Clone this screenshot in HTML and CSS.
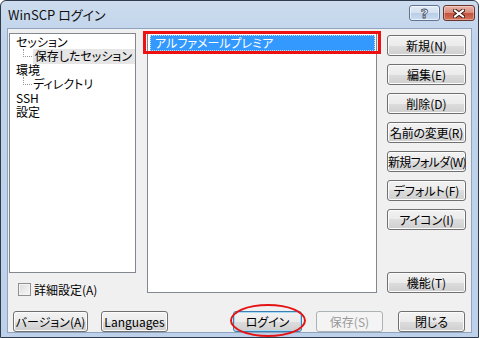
FILE: index.html
```html
<!DOCTYPE html>
<html lang="ja">
<head>
    <meta charset="UTF-8">
    <title>WinSCP ログイン</title>
    <link rel="stylesheet" href="styles.css">
</head>
<body>
    <div class="window">
        <div class="titlebar">
            <span class="title">WinSCP ログイン</span>
            <div class="caption-buttons">
                <span class="cap-btn help"><span class="q">?</span></span>
                <span class="cap-btn close">
                    <svg width="12" height="9" viewBox="0 0 12 9">
                        <path d="M2 1.5 L10 7.5 M10 1.5 L2 7.5" stroke="#3a1c18" stroke-width="4" stroke-linecap="square" fill="none"/>
                        <path d="M2 1.5 L10 7.5 M10 1.5 L2 7.5" stroke="#ffffff" stroke-width="2" stroke-linecap="square" fill="none"/>
                    </svg>
                </span>
            </div>
        </div>
        <div class="client">
            <div class="content">
                <div class="left">
                    <ul class="tree">
                        <li>セッション</li>
                        <li class="child"><span class="branch"></span><span class="sel">保存したセッション</span></li>
                        <li>環境</li>
                        <li class="child"><span class="branch"></span><span>ディレクトリ</span></li>
                        <li>SSH</li>
                        <li>設定</li>
                    </ul>
                    <label class="check"><span class="box"></span>詳細設定(A)</label>
                </div>
                <div class="sessions">
                    <div class="session selected">アルファメールプレミア</div>
                    <span class="mark-rect"></span>
                </div>
                <div class="side">
                    <button class="btn">新規(N)</button>
                    <button class="btn">編集(E)</button>
                    <button class="btn">削除(D)</button>
                    <button class="btn tight">名前の変更(R)</button>
                    <button class="btn tighter">新規フォルダ(W)</button>
                    <button class="btn">デフォルト(F)</button>
                    <button class="btn">アイコン(I)</button>
                    <div class="grow"></div>
                    <button class="btn">機能(T)</button>
                </div>
            </div>
            <div class="bottom">
                <button class="btn version">バージョン(A)</button>
                <button class="btn languages">Languages</button>
                <div class="grow"></div>
                <div class="login-wrap">
                    <button class="btn default">ログイン</button>
                    <span class="mark-ellipse"></span>
                </div>
                <button class="btn save" disabled>保存(S)</button>
                <button class="btn close-btn">閉じる</button>
            </div>
        </div>
    </div>
</body>
</html>
```

FILE: styles.css
```css
body {
    margin: 0;
    background-color: #ffffff;
    font-family: "Noto Sans CJK JP", sans-serif;
    font-size: 12px;
    font-feature-settings: "palt";
}

.window {
    width: 479px;
    height: 338px;
    box-sizing: border-box;
    border: 1px solid #2f3b4c;
    border-radius: 6px 6px 0 0;
    background: linear-gradient(#cddcee, #bfd3eb 40px, #bdd1ea);
    padding: 0 6px 4px 6px;
    display: flex;
    flex-direction: column;
}

.titlebar {
    height: 27px;
    display: flex;
    align-items: flex-start;
}

.title {
    line-height: 27px;
    font-size: 13px;
    color: #111;
    padding-left: 1px;
}

.caption-buttons {
    margin-left: auto;
    margin-top: 4px;
    display: flex;
    gap: 3px;
    margin-right: -3px;
}

.cap-btn {
    height: 16px;
    box-sizing: border-box;
    border: 1px solid #5f7490;
    border-radius: 3px;
    display: flex;
    align-items: center;
    justify-content: center;
}

.help {
    width: 31px;
    background: linear-gradient(#e4ecf6 0%, #d3e0ef 50%, #b9cde6 50%, #c9dbef 100%);
    box-shadow: inset 0 0 0 1px rgba(255, 255, 255, 0.6);
}

.help .q {
    font-family: "DejaVu Sans", sans-serif;
    font-weight: bold;
    font-size: 13px;
    line-height: 13px;
    color: #ffffff;
    -webkit-text-stroke: 0.8px #3d4a5c;
}

.close {
    width: 32px;
    border-color: #6c332a;
    background: linear-gradient(#e9b3a8 0%, #d88a79 50%, #c4503b 50%, #d2745c 100%);
    box-shadow: inset 0 0 0 1px rgba(255, 255, 255, 0.35);
}

.client {
    flex: 1;
    background-color: #f0f0f0;
    border: 1px solid #8fa4bf;
    display: flex;
    flex-direction: column;
}

.content {
    display: flex;
    padding: 4px 0 0 1px;
}

.left {
    width: 127px;
}

.tree {
    list-style: none;
    margin: 0;
    padding: 1px 0 0 6px;
    width: 127px;
    height: 240px;
    box-sizing: border-box;
    background-color: #ffffff;
    border: 1px solid #828790;
}

.tree li {
    height: 14px;
    line-height: 14px;
    display: flex;
    align-items: center;
    white-space: nowrap;
}

.tree .child {
    padding-left: 7px;
}

.branch {
    width: 9px;
    height: 8px;
    margin-top: -7px;
    border-left: 1px dotted #9a9a9a;
    border-bottom: 1px dotted #9a9a9a;
    box-sizing: border-box;
    margin-right: 1px;
}

.tree .sel {
    background-color: #e6e6e6;
    padding: 0 3px 1px 2px;
}

.check {
    display: flex;
    align-items: center;
    margin: 9px 0 0 9px;
    height: 14px;
}

.box {
    width: 13px;
    height: 13px;
    box-sizing: border-box;
    border: 1px solid #8e8f8f;
    background: linear-gradient(135deg, #dcdcdc, #f7f7f7);
    box-shadow: inset 0 0 0 1px #f4f4f4;
    margin-right: 3px;
}

.sessions {
    position: relative;
    width: 230px;
    height: 260px;
    margin-left: 11px;
    box-sizing: border-box;
    background-color: #ffffff;
    border: 1px solid #828790;
    padding: 1px 1px 0 2px;
}

.session {
    height: 16px;
    line-height: 16px;
    padding-left: 5px;
}

.session.selected {
    background-color: #3399ff;
    color: #ffffff;
    outline: 1px dotted rgba(255, 255, 255, 0.7);
    outline-offset: -1px;
}

.mark-rect {
    position: absolute;
    left: -5px;
    top: -3px;
    width: 238px;
    height: 23px;
    box-sizing: border-box;
    border: 3px solid #ee1111;
}

.side {
    display: flex;
    flex-direction: column;
    gap: 8px;
    width: 79px;
    margin-left: 10px;
    padding-top: 2px;
    height: 260px;
    box-sizing: border-box;
}

.grow {
    flex: 1;
}

.btn {
    height: 21px;
    box-sizing: border-box;
    border: 1px solid #707070;
    border-radius: 3px;
    background: linear-gradient(#f2f2f2 0%, #ebebeb 50%, #dddddd 50%, #cfcfcf 100%);
    box-shadow: inset 0 0 0 1px #fbfbfb;
    font-family: "Noto Sans CJK JP", sans-serif;
    font-size: 12px;
    font-feature-settings: "palt";
    line-height: 17px;
    color: #000000;
    padding: 0;
    white-space: nowrap;
}

.side .btn {
    width: 79px;
}

.btn.tight {
    letter-spacing: -0.3px;
}

.btn.tighter {
    letter-spacing: -0.7px;
}

.bottom {
    display: flex;
    margin-top: 15px;
    padding: 0 6px 0 5px;
}

.version {
    width: 75px;
}

.languages {
    width: 67px;
    margin-left: 13px;
}

.login-wrap {
    position: relative;
}

.default {
    width: 69px;
    border-color: #3c7fb1;
    box-shadow: inset 0 0 0 1px #a6dcf5;
}

.mark-ellipse {
    position: absolute;
    left: -3px;
    top: -7px;
    width: 76px;
    height: 33px;
    box-sizing: border-box;
    border: 2px solid #e51414;
    border-radius: 50%;
}

.save {
    width: 67px;
    margin-left: 14px;
    border-color: #adb2b5;
    background: #f4f4f4;
    box-shadow: none;
    color: #9a9a9a;
}

.close-btn {
    width: 67px;
    margin-left: 15px;
}
```
